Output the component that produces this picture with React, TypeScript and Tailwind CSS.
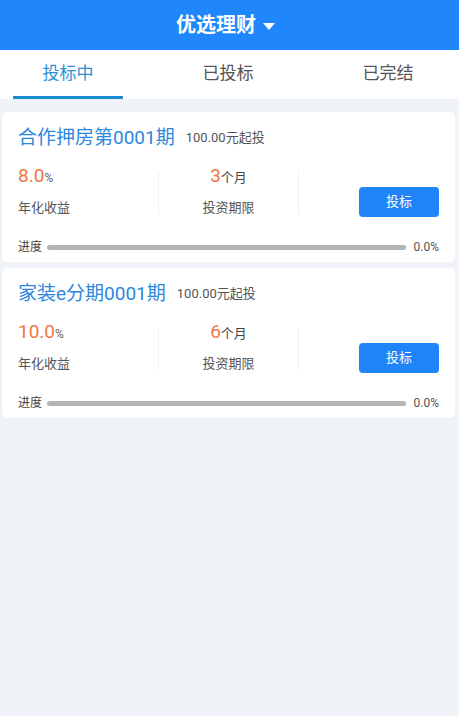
import React from "react";

type Product = {
  name: string;
  minAmount: string;
  rate: string;
  months: number;
  progress: number;
};

const products: Product[] = [
  { name: "合作押房第0001期", minAmount: "100.00元起投", rate: "8.0", months: 3, progress: 0 },
  { name: "家装e分期0001期", minAmount: "100.00元起投", rate: "10.0", months: 6, progress: 0 },
];

const tabs = ["投标中", "已投标", "已完结"];

function ProductCard({ product }: { product: Product }) {
  return (
    <section className="ml-[2px] w-[453px] rounded-[5px] bg-white pl-[16px] pr-[16px]">
      <div className="flex h-[50px] items-center pt-[1px]">
        <h2 className="text-[19px] leading-none text-[#2c87dd]">{product.name}</h2>
        <span className="ml-[11px] text-[13px] leading-none text-[#555]">{product.minAmount}</span>
      </div>
      <div className="grid h-[77px] grid-cols-3">
        <div className="flex flex-col">
          <p className="mt-[4px] leading-none">
            <span className="text-[19px] text-[#ef7843]">{product.rate}</span>
            <span className="text-[12px] text-[#666]">%</span>
          </p>
          <p className="mt-[16px] text-[13px] leading-none text-[#555]">年化收益</p>
        </div>
        <div className="mb-[32px] mt-[10px] flex flex-col items-center border-x border-[#f0f0f0]">
          <p className="-mt-[6px] leading-none">
            <span className="text-[19px] text-[#ef7843]">{product.months}</span>
            <span className="text-[13px] text-[#444]">个月</span>
          </p>
          <p className="mt-[16px] text-[13px] leading-none text-[#555]">投资期限</p>
        </div>
        <div className="flex items-start justify-end pt-[25px]">
          <button
            type="button"
            className="h-[30px] w-[80px] rounded-[4px] bg-[#1f84f8] text-[13px] text-white"
          >
            投标
          </button>
        </div>
      </div>
      <div className="flex h-[23px] items-start gap-[5px] pt-[1px]">
        <span className="text-[12px] leading-[14px] text-[#444]">进度</span>
        <div className="mt-[5px] h-[5px] flex-1 rounded-full bg-[#b4b4b4]">
          <div className="h-full rounded-full bg-[#1f84f8]" style={{ width: `${product.progress}%` }} />
        </div>
        <span className="ml-[3px] text-[12px] leading-[14px] text-[#555]">{product.progress.toFixed(1)}%</span>
      </div>
    </section>
  );
}

export default function App() {
  return (
    <div
      className="min-h-[716px] w-[459px] bg-[#eff2f7]"
      style={{ fontFamily: "Roboto, 'Noto Sans CJK SC', sans-serif" }}
    >
      <header className="flex h-[50px] items-center justify-center bg-[#1f86fc] pr-[8px]">
        <h1 className="text-[20px] font-bold leading-none text-white">优选理财</h1>
        <svg width="12" height="7" viewBox="0 0 12 7" className="ml-[7px] mt-[3px]">
          <path d="M0 0H12L6 7Z" fill="white" />
        </svg>
      </header>
      <nav className="flex h-[49px] justify-between bg-white pl-[13px] pr-[16px]">
        {tabs.map((tab, i) => (
          <div
            key={tab}
            className={`flex w-[110px] items-center justify-center border-b-[3px] pt-[2px] text-[17px] ${
              i === 0 ? "border-[#1b8bd4] text-[#2b8fd8]" : "border-transparent text-[#555]"
            }`}
          >
            {tab}
          </div>
        ))}
      </nav>
      <div className="flex flex-col gap-[6px] pt-[13px]">
        {products.map((p) => (
          <ProductCard key={p.name} product={p} />
        ))}
      </div>
    </div>
  );
}
